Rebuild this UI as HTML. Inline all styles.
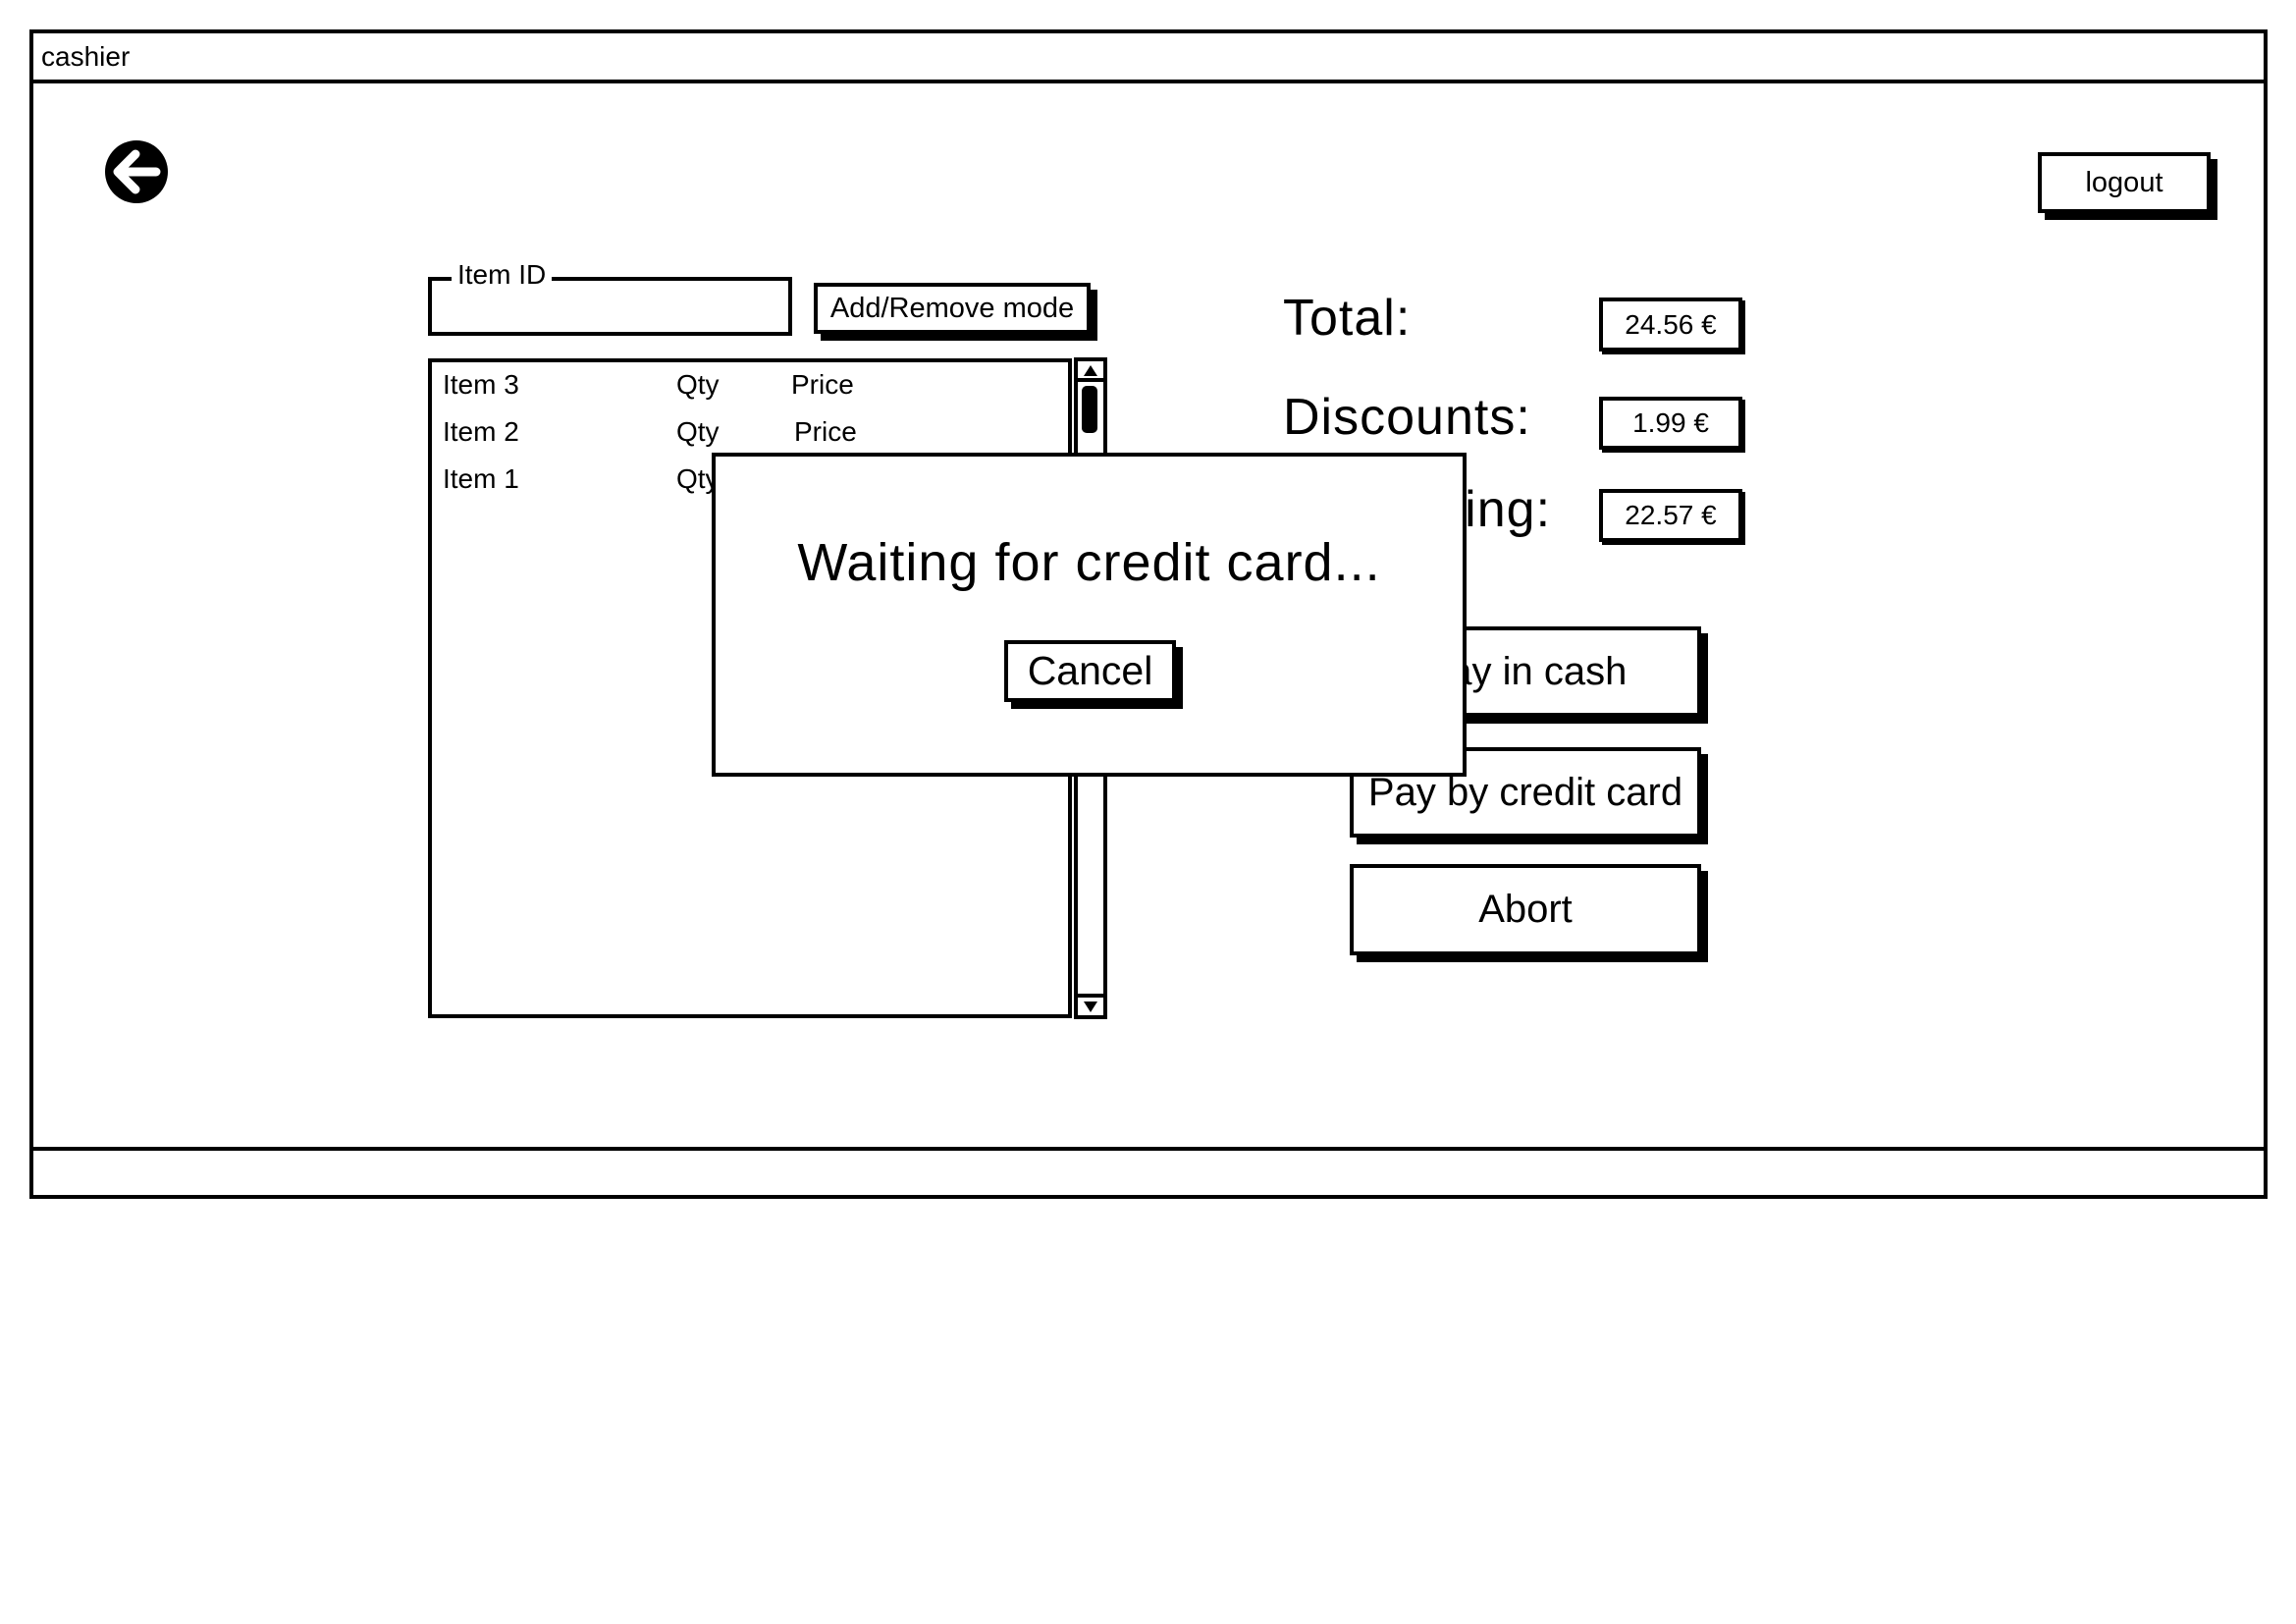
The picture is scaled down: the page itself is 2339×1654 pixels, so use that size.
<!DOCTYPE html>
<html><head><meta charset="utf-8"><style>
*{box-sizing:border-box;margin:0;padding:0}
body{width:2339px;height:1654px;background:#fff;position:relative;overflow:hidden;font-family:"Liberation Sans",sans-serif;color:#000}
.a{position:absolute}
.b{position:absolute;border:4px solid #000;background:#fff}
.sh{box-shadow:7px 7px 0 #000}
.t{position:absolute;white-space:nowrap;line-height:1}
.c{display:flex;align-items:center;justify-content:center}
</style></head><body>
<div class="b" style="left:30px;top:30px;width:2280px;height:1191px"></div>
<div class="a" style="left:30px;top:81px;width:2280px;height:4px;background:#000"></div>
<div class="a" style="left:30px;top:1168px;width:2280px;height:4px;background:#000"></div>
<div class="t" style="left:42px;top:44px;font-size:28px">cashier</div>

<svg class="a" style="left:105px;top:141px" width="68" height="68" viewBox="0 0 68 68">
<circle cx="34" cy="34" r="32" fill="#000"/>
<path d="M54 34H16M33 16L15 34L33 52" stroke="#fff" stroke-width="9" fill="none" stroke-linecap="round" stroke-linejoin="round"/>
</svg>

<div class="b sh c" style="left:2076px;top:155px;width:176px;height:62px;font-size:29px">logout</div>

<div class="b" style="left:436px;top:282px;width:371px;height:60px"></div>
<div class="t" style="left:460px;top:266px;font-size:28px;background:#fff;padding:0 6px">Item ID</div>
<div class="b sh c" style="left:829px;top:288px;width:282px;height:52px;font-size:29px">Add/Remove mode</div>

<div class="b" style="left:436px;top:365px;width:656px;height:672px"></div>
<div class="t" style="left:451px;top:378px;font-size:28px">Item 3</div>
<div class="t" style="left:689px;top:378px;font-size:28px">Qty</div>
<div class="t" style="left:806px;top:378px;font-size:28px">Price</div>
<div class="t" style="left:451px;top:426px;font-size:28px">Item 2</div>
<div class="t" style="left:689px;top:426px;font-size:28px">Qty</div>
<div class="t" style="left:809px;top:426px;font-size:28px">Price</div>
<div class="t" style="left:451px;top:474px;font-size:28px">Item 1</div>
<div class="t" style="left:689px;top:474px;font-size:28px">Qty</div>

<div class="b" style="left:1094px;top:364px;width:34px;height:674px"></div>
<div class="a" style="left:1094px;top:385px;width:34px;height:4px;background:#000"></div>
<div class="a" style="left:1094px;top:1012px;width:34px;height:4px;background:#000"></div>
<svg class="a" style="left:1094px;top:364px" width="34" height="26"><path d="M10 19L17 8L24 19Z" fill="#000"/></svg>
<svg class="a" style="left:1094px;top:1014px" width="34" height="24"><path d="M10 6L17 17L24 6Z" fill="#000"/></svg>
<div class="a" style="left:1102px;top:393px;width:16px;height:48px;background:#000;border-radius:5px"></div>

<div class="t" style="left:1307px;top:298px;font-size:52px;letter-spacing:1px">Total:</div>
<div class="t" style="left:1307px;top:399px;font-size:52px;letter-spacing:1px">Discounts:</div>
<div class="t" style="left:1307px;top:493px;font-size:52px;letter-spacing:1px">Remaining:</div>
<div class="b c" style="left:1629px;top:303px;width:146px;height:55px;font-size:28px;box-shadow:3px 3px 0 #000">24.56 €</div>
<div class="b c" style="left:1629px;top:404px;width:146px;height:54px;font-size:28px;box-shadow:3px 3px 0 #000">1.99 €</div>
<div class="b c" style="left:1629px;top:498px;width:146px;height:54px;font-size:28px;box-shadow:3px 3px 0 #000">22.57 €</div>

<div class="b sh c" style="left:1375px;top:638px;width:358px;height:92px;font-size:40px">Pay in cash</div>
<div class="b sh c" style="left:1375px;top:761px;width:358px;height:92px;font-size:40px">Pay by credit card</div>
<div class="b sh c" style="left:1375px;top:880px;width:358px;height:93px;font-size:40px">Abort</div>

<div class="b" style="left:725px;top:461px;width:769px;height:330px"></div>
<div class="t" style="left:725px;width:769px;text-align:center;top:546px;font-size:54px;letter-spacing:1px">Waiting for credit card...</div>
<div class="b sh c" style="left:1023px;top:652px;width:175px;height:63px;font-size:41px">Cancel</div>
</body></html>
